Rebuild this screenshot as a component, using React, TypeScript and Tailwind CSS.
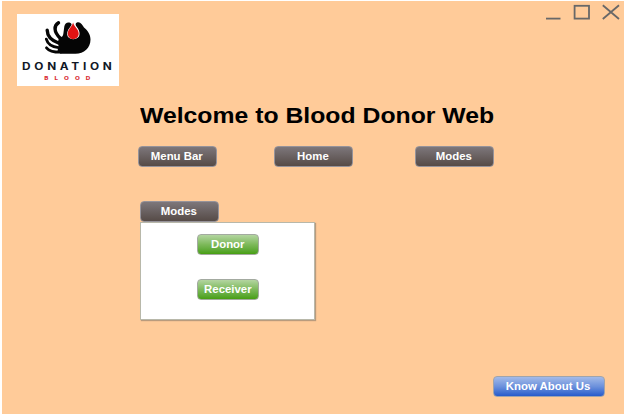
type ButtonProps = { label: string; tone: "gray" | "green" | "blue"; className?: string };

const tones = {
  gray: "border-[#96939a] from-[#7d777b] to-[#564b47] pr-[2px]",
  green: "border-[#a3aaa0] from-[#b3d5a0] via-[#7db95a] to-[#479f0c]",
  blue: "border-[#a0a4ac] from-[#a3bae8] via-[#6c91dc] to-[#265acb] pr-[2px]",
};

function Button({ label, tone, className = "" }: ButtonProps) {
  return (
    <button
      className={`flex h-[21px] shrink-0 items-center justify-center rounded-[4px] border bg-linear-to-b text-[10px] leading-none font-bold whitespace-nowrap text-white ${tones[tone]} ${className}`}
    >
      <span className="inline-block scale-x-[1.14]">{label}</span>
    </button>
  );
}

function Logo() {
  return (
    <svg className="h-[72px] w-[102px] bg-white" viewBox="16.5 14 102 72">
      <g fill="none" stroke="#050505" strokeLinecap="round" strokeWidth="3.4">
        <path d="M58 22.8C53.4 25.5 53 31.5 59.5 38" />
        <path d="M46.7 30.3C46.8 35.8 50 40.2 58 43" />
        <path d="M45.8 39.2C47 43.6 51.5 47 58 47.6" strokeWidth="2.8" />
        <path d="M46 47.8C48.5 51 53 52.2 60 52.2" strokeWidth="2.8" />
      </g>
      <path
        d="M59 36.5C61.5 38.3 62.8 35.5 63 32.5L63.8 26.5C64.5 23.2 67 21.7 70 23C72 24.2 70.8 25.5 69.5 27.2C66.5 30.5 66 34 67.4 36.8C69.8 40 75.8 40 78.2 36.8C80 33.8 78.8 30 76.5 27.2C74.8 25 74.6 23.5 76.4 22.5C79.5 21 81.8 24.5 83.5 27.4C87.5 30.6 90 34.5 90 39.5C90 48 83.5 53.8 75 53.8H60L57 51L58 46L57.5 41.5Z"
        fill="#050505"
      />
      <path d="M72.6 22.6C73.5 27 78.2 29.3 78.2 33.5C78.2 36.9 75.8 39 72.8 39C69.7 39 67.3 36.7 67.3 33.4C67.3 29.5 71.6 27 72.6 22.6Z" fill="#e01313" />
      <text transform="translate(21.6 69.8) scale(1.22 1)" textLength="73.5" fontSize="9.7" fontWeight="700" fill="#111827" className="font-['Inter',sans-serif]">
        DONATION
      </text>
      <text transform="translate(43.8 80.2) scale(1.25 1)" textLength="36.8" fontSize="5" fontWeight="800" fill="#d92e36" className="font-['Inter',sans-serif]">
        BLOOD
      </text>
    </svg>
  );
}

export default function App() {
  return (
    <div className="h-[414px] w-[624px] overflow-hidden bg-white pt-px pl-[2px] font-['Liberation_Sans',Arial,sans-serif]">
      <main className="flex h-[413px] flex-col bg-[#ffcb99]">
        <header className="flex h-[101px] shrink-0 items-start justify-between pt-[13px] pl-[14.5px]">
          <Logo />
          <svg className="-mt-[13px] h-[24px] w-[82px]" viewBox="542 1 82 24" fill="none" stroke="#686868" strokeWidth="1.8">
            <path d="M546 18.6H560.5" />
            <rect x="574.6" y="5.8" width="14.4" height="12.8" />
            <path d="M602.8 5.2L619 19M619 5.2L602.8 19" />
          </svg>
        </header>

        <h1 className="ml-[138px] h-[44px] shrink-0 origin-left scale-x-[1.126] self-start text-[22px] leading-[28px] font-bold whitespace-nowrap text-black">
          Welcome to Blood Donor Web
        </h1>

        <nav className="ml-[136px] flex w-[356px] shrink-0">
          <Button label="Menu Bar" tone="gray" className="w-[79px]" />
          <Button label="Home" tone="gray" className="ml-[57px] w-[79px]" />
          <Button label="Modes" tone="gray" className="ml-[62px] w-[79px]" />
        </nav>

        <section className="mt-[34px] ml-[138px] w-[175px]">
          <Button label="Modes" tone="gray" className="w-[79px]" />
          <div className="flex h-[98px] flex-col gap-[24px] border border-[#b8b8aa] bg-white pt-[11px] pl-[56px] shadow-[1px_1px_1px_#b99b7d]">
            <Button label="Donor" tone="green" className="w-[62px]" />
            <Button label="Receiver" tone="green" className="w-[62px]" />
          </div>
        </section>

        <footer className="mt-auto flex justify-end pr-[19px] pb-[17px]">
          <Button label="Know About Us" tone="blue" className="w-[112px]" />
        </footer>
      </main>
    </div>
  );
}
